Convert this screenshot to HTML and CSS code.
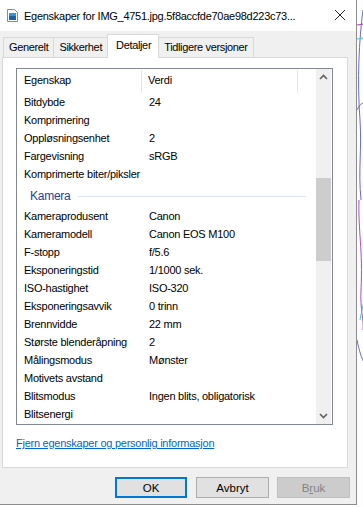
FILE: index.html
```html
<!DOCTYPE html>
<html lang="no">

<head>
    <meta charset="UTF-8">
    <title>Egenskaper</title>
    <link rel="stylesheet" href="styles.css">
</head>

<body>
    <div class="screen">
        <div class="window">
            <!-- Title bar -->
            <div class="titlebar">
                <svg class="file-icon" width="11" height="13" viewBox="0 0 11 13">
                    <path d="M0.5 0.5h7l3 3v9h-10z" fill="#fff" stroke="#8a8a8a" />
                    <rect x="2" y="4" width="7" height="7" fill="#1f5fa8" />
                    <rect x="2" y="4" width="7" height="3" fill="#3d8fd6" />
                </svg>
                <span class="title">Egenskaper for IMG_4751.jpg.5f8accfde70ae98d223c73...</span>
                <svg class="close" width="12" height="12" viewBox="0 0 12 12">
                    <path d="M1 1L11 11M11 1L1 11" stroke="#222" stroke-width="1" />
                </svg>
            </div>

            <!-- Tabs -->
            <div class="tabs">
                <div class="tab">Generelt</div>
                <div class="tab">Sikkerhet</div>
                <div class="tab active">Detaljer</div>
                <div class="tab">Tidligere versjoner</div>
            </div>

            <div class="panel">
                <div class="listbox">
                    <div class="list">
                        <div class="list-head">
                            <span class="col-name">Egenskap</span>
                            <span class="col-value">Verdi</span>
                            <span class="col-rest"></span>
                        </div>
                        <div id="rows"></div>
                        <div class="focus-line"></div>
                    </div>
                    <div class="scrollbar">
                        <svg class="arrow" width="15" height="17" viewBox="0 0 15 17">
                            <path d="M4 10L7.5 6.5L11 10" fill="none" stroke="#606060" stroke-width="1.6" />
                        </svg>
                        <div class="track">
                            <div class="thumb"></div>
                        </div>
                        <svg class="arrow" width="15" height="17" viewBox="0 0 15 17">
                            <path d="M4 7L7.5 10.5L11 7" fill="none" stroke="#606060" stroke-width="1.6" />
                        </svg>
                    </div>
                </div>
                <a class="remove-link" href="#">Fjern egenskaper og personlig informasjon</a>
            </div>

            <!-- Dialog buttons -->
            <div class="buttons">
                <button class="btn default">OK</button>
                <button class="btn">Avbryt</button>
                <button class="btn disabled">B<u>r</u>uk</button>
            </div>
        </div>

        <div class="desktop">
            <svg width="7" height="507" viewBox="0 0 7 507">
                <path d="M6 10C2 40 0 80 3 120C5 150 1 170 4 200" fill="none" stroke="#6a6ad0" stroke-width="1" />
                <path d="M0 25L7 24" stroke="#b04cc8" stroke-width="1.2" />
                <path d="M0 39L7 38" stroke="#4cc8d0" stroke-width="1.2" />
                <path d="M0 110C3 104 5 103 7 103" fill="none" stroke="#6a6ad0" />
                <path d="M2 200C1 230 6 250 4 290C3 310 7 320 6 330" fill="none" stroke="#b04cc8" />
                <path d="M7 300L3 320" stroke="#4cc8d0" />
                <path d="M0 340C2 350 5 360 7 362" fill="none" stroke="#6a6ad0" />
            </svg>
        </div>
    </div>

    <script>
        // Property rows of the details list
        const rows = [
            ["Bitdybde", "24"],
            ["Komprimering", ""],
            ["Oppløsningsenhet", "2"],
            ["Fargevisning", "sRGB"],
            ["Komprimerte biter/piksler", ""],
            { group: "Kamera" },
            ["Kameraprodusent", "Canon"],
            ["Kameramodell", "Canon EOS M100"],
            ["F-stopp", "f/5.6"],
            ["Eksponeringstid", "1/1000 sek."],
            ["ISO-hastighet", "ISO-320"],
            ["Eksponeringsavvik", "0 trinn"],
            ["Brennvidde", "22 mm"],
            ["Største blenderåpning", "2"],
            ["Målingsmodus", "Mønster"],
            ["Motivets avstand", ""],
            ["Blitsmodus", "Ingen blits, obligatorisk"],
            ["Blitsenergi", ""]
        ];

        const rowsEl = document.getElementById("rows");
        rows.forEach(item => {
            const row = document.createElement("div");
            if (item.group) {
                row.className = "group";
                row.innerHTML = `<span>${item.group}</span><i></i>`;
            } else {
                row.className = "row";
                row.innerHTML = `<span class="col-name">${item[0]}</span><span class="col-value">${item[1]}</span>`;
            }
            rowsEl.appendChild(row);
        });
    </script>
</body>

</html>
```

FILE: styles.css
```css
/* Reset */
body {
    margin: 0;
    padding: 0;
    background: #fff;
    font-family: "Liberation Sans", Arial, sans-serif;
    font-size: 11px;
    letter-spacing: -0.25px;
    color: #000;
}

.screen {
    display: flex;
    width: 363px;
    height: 507px;
    overflow: hidden;
}

/* Dialog window */
.window {
    width: 356px;
    height: 504px;
    flex-shrink: 0;
    background: #f0f0f0;
    border-right: 1px solid #8c8c8c;
    border-bottom: 1px solid #8c8c8c;
    display: flex;
    flex-direction: column;
}

.desktop {
    flex: 1;
    background: #fdfdfd;
}

.desktop svg {
    display: block;
}

/* Title bar */
.titlebar {
    height: 31px;
    background: #fff;
    display: flex;
    align-items: center;
    padding-left: 7px;
    flex-shrink: 0;
}

.file-icon {
    margin-top: -1px;
}

.title {
    margin-left: 6px;
    font-size: 11px;
    letter-spacing: -0.27px;
    white-space: nowrap;
    flex: 1;
}

.close {
    margin-right: 10px;
    margin-top: -2px;
}

/* Tabs */
.tabs {
    display: flex;
    align-items: flex-end;
    padding-left: 3px;
    height: 26px;
    position: relative;
    z-index: 1;
}

.tab {
    height: 19px;
    line-height: 19px;
    padding: 0 5px;
    border: 1px solid #d9d9d9;
    border-bottom: none;
    margin-right: -1px;
    background: #f0f0f0;
    letter-spacing: -0.35px;
}

.tab.active {
    background: #fff;
    height: 23px;
    line-height: 20px;
    padding: 0 7px 0 8px;
    margin-bottom: -1px;
}

/* Tab panel */
.panel {
    margin-left: 2px;
    width: 344px;
    height: 409px;
    background: #fff;
    border: 1px solid #d9d9d9;
    display: flex;
    flex-direction: column;
}

.listbox {
    margin: 10px 0 0 13px;
    width: 315px;
    height: 355px;
    border: 1px solid #828790;
    display: flex;
    overflow: hidden;
}

.list {
    flex: 1;
    overflow: hidden;
}

.list-head {
    display: flex;
    height: 23px;
    align-items: center;
    padding-top: 1px;
}

.list-head span {
    height: 23px;
    line-height: 21px;
    border-right: 1px solid #e5e5e5;
}

.col-name {
    width: 117px;
    padding-left: 7px;
    flex-shrink: 0;
    white-space: nowrap;
}

.col-value {
    padding-left: 6px;
    white-space: nowrap;
}

.list-head .col-value {
    width: 149px;
}

.list-head .col-rest {
    border-right: none;
}

.row {
    display: flex;
    height: 18px;
    line-height: 18px;
}

.row .col-name {
    border: none;
}

.row .col-name,
.row .col-value {
    padding-right: 1px;
}

.row .col-value {
    margin-left: 1px;
}

.group {
    display: flex;
    align-items: center;
    height: 23px;
    padding-left: 13px;
    padding-top: 1px;
    color: #1e3f9a;
    font-size: 12px;
}

.group i {
    flex: 1;
    height: 1px;
    background: #dde4f0;
    margin: 1px 10px 0 7px;
}

.focus-line {
    height: 0;
    margin: 1px 0 0 5px;
    width: 277px;
    border-top: 2px dotted #0a6ed1;
}

/* Scrollbar */
.scrollbar {
    width: 15px;
    background: #f0f0f0;
    display: flex;
    flex-direction: column;
    margin-right: 1px;
}

.arrow {
    display: block;
}

.track {
    flex: 1;
    padding-top: 92px;
}

.thumb {
    height: 83px;
    background: #cdcdcd;
}

/* Link */
.remove-link {
    margin: 12px 0 0 13px;
    color: #0066cc;
    text-decoration: underline;
}

/* Buttons */
.buttons {
    display: flex;
    justify-content: flex-end;
    gap: 8px;
    padding: 9px 6px 0 0;
}

.btn {
    width: 73px;
    height: 21px;
    background: #e1e1e1;
    border: 1px solid #adadad;
    font-family: "Liberation Sans", Arial, sans-serif;
    font-size: 11.5px;
    color: #000;
    padding: 0;
}

.btn.default {
    border: 2px solid #0078d7;
    width: 72px;
    margin-right: 1px;
}

.btn.disabled {
    background: #cccccc;
    border-color: #bfbfbf;
    color: #838383;
}
```
